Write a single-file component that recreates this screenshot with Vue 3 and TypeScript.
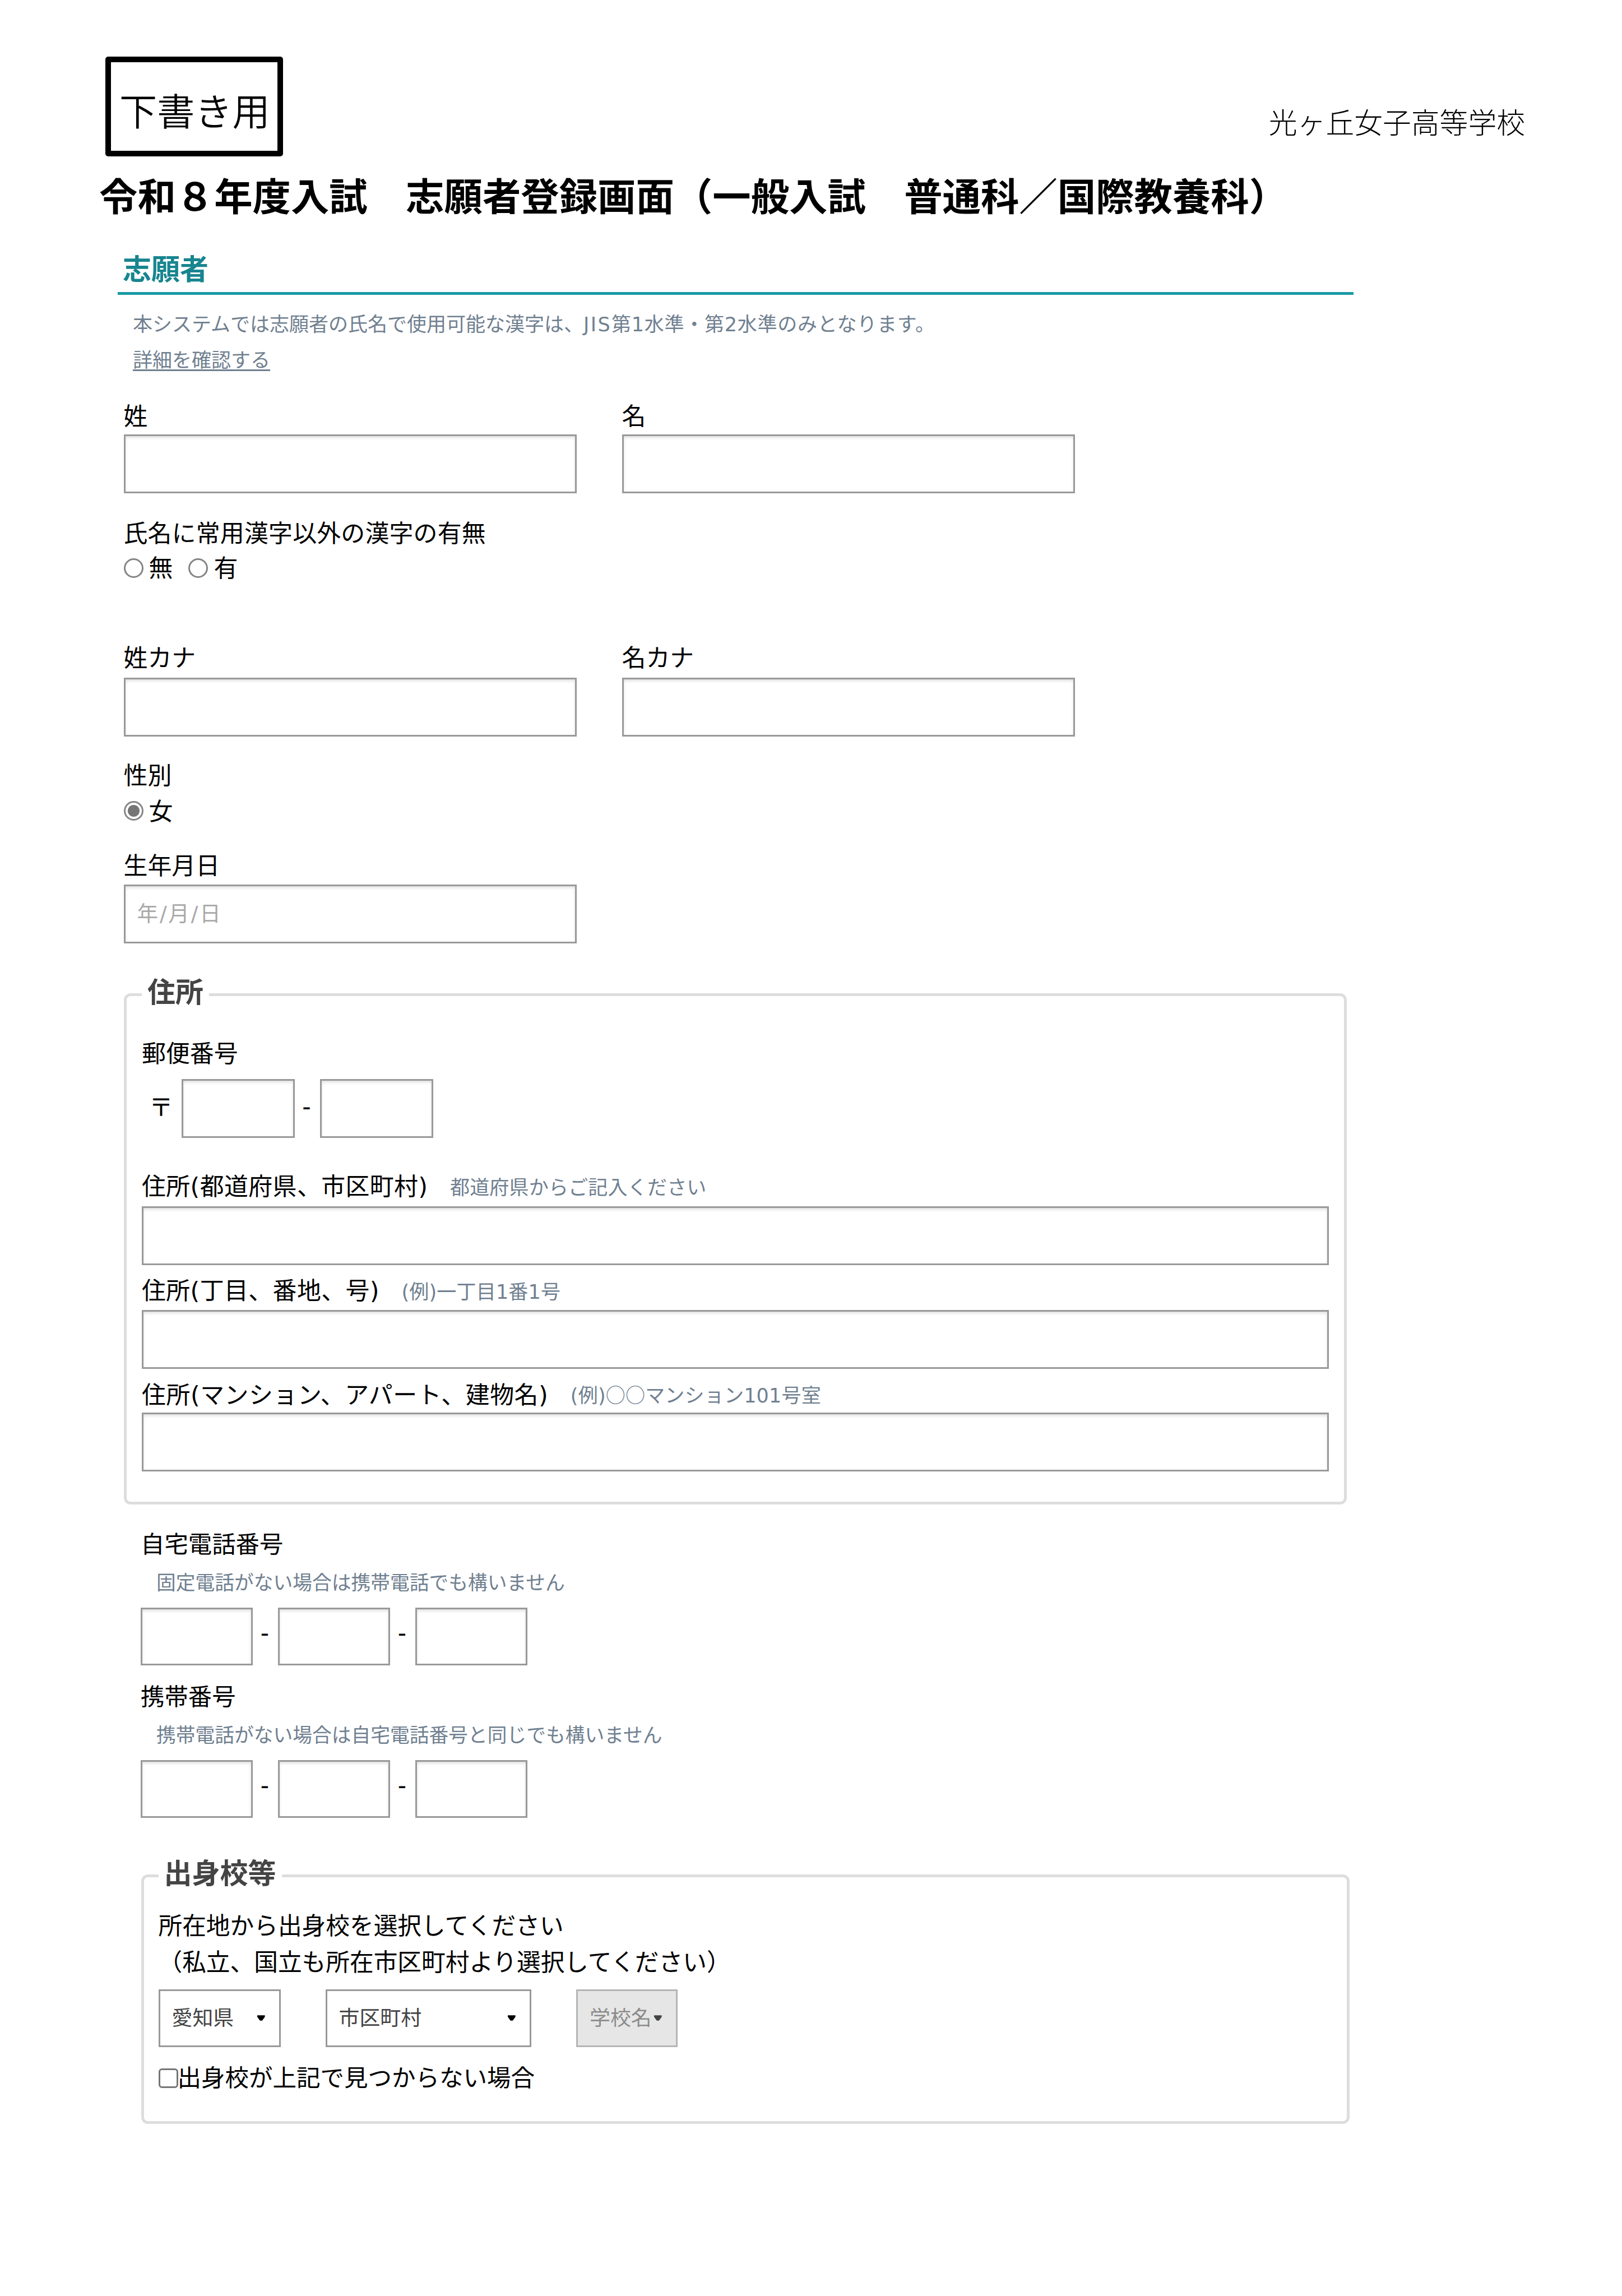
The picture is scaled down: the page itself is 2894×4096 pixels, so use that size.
<script setup lang="ts">
interface AddressField {
  label: string
  pre: string
  circles: string
  post: string
  cls: string
}

const addressFields: AddressField[] = [
  { label: '住所(都道府県、市区町村)', pre: '都道府県からご記入ください', circles: '', post: '', cls: 'addr-a' },
  { label: '住所(丁目、番地、号)', pre: '(例)一丁目1番1号', circles: '', post: '', cls: 'addr-b' },
  { label: '住所(マンション、アパート、建物名)', pre: '(例)', circles: '○○', post: 'マンション101号室', cls: 'addr-c' },
]

const phones = [
  { label: '自宅電話番号', note: '固定電話がない場合は携帯電話でも構いません' },
  { label: '携帯番号', note: '携帯電話がない場合は自宅電話番号と同じでも構いません' },
]

const selects = [
  { text: '愛知県', cls: 'pref', disabled: false },
  { text: '市区町村', cls: 'city', disabled: false },
  { text: '学校名', cls: 'school-select', disabled: true },
]
</script>

<template>
  <div class="page">
    <header class="top">
      <div class="draft">下書き用</div>
      <div class="school">光ヶ丘女子高等学校</div>
    </header>
    <h1 class="title">令和８年度入試　志願者登録画面（一般入試　普通科／国際教養科）</h1>

    <h2 class="section">志願者</h2>
    <div class="intro">
      <div class="intro-text">本システムでは志願者の氏名で使用可能な漢字は、<span class="jis">JIS</span><span class="level">第1水準・第2水準のみとなります。</span></div>
      <a class="link">詳細を確認する</a>
    </div>

    <div class="applicant">
      <div class="pair name">
        <div class="field"><div class="label">姓</div><div class="input"></div></div>
        <div class="field"><div class="label">名</div><div class="input"></div></div>
      </div>

      <div class="label kanji">氏名に常用漢字以外の漢字の有無</div>
      <div class="radios">
        <span class="radio"></span><span class="opt first">無</span>
        <span class="radio"></span><span class="opt">有</span>
      </div>

      <div class="pair kana">
        <div class="field"><div class="label">姓カナ</div><div class="input"></div></div>
        <div class="field"><div class="label">名カナ</div><div class="input"></div></div>
      </div>

      <div class="label gender">性別</div>
      <div class="radios gender-row">
        <span class="radio checked"></span><span class="opt">女</span>
      </div>

      <div class="label birth">生年月日</div>
      <div class="input birth-input">年<span class="slash">/</span>月<span class="slash">/</span>日</div>
    </div>

    <section class="group address">
      <h3 class="legend">住所</h3>
      <div class="label zip-label">郵便番号</div>
      <div class="zip">
        <span class="mark">〒</span>
        <div class="input zip-box"></div>
        <span class="dash">-</span>
        <div class="input zip-box"></div>
      </div>
      <div v-for="f in addressFields" :key="f.label" class="addr" :class="f.cls">
        <div class="addr-head">
          <span class="label">{{ f.label }}</span>
          <span class="hint">{{ f.pre }}<span class="circles">{{ f.circles }}</span>{{ f.post }}</span>
        </div>
        <div class="input"></div>
      </div>
    </section>

    <div class="phones">
      <div v-for="p in phones" :key="p.label" class="phone">
        <div class="label">{{ p.label }}</div>
        <div class="hint">{{ p.note }}</div>
        <div class="tel">
          <div class="input"></div>
          <span class="dash">-</span>
          <div class="input"></div>
          <span class="dash">-</span>
          <div class="input"></div>
        </div>
      </div>
    </div>

    <section class="group origin">
      <h3 class="legend">出身校等</h3>
      <div class="guide">
        <div>所在地から出身校を選択してください</div>
        <div class="paren-line">（私立、国立も所在市区町村より選択してください）</div>
      </div>
      <div class="selects">
        <div v-for="s in selects" :key="s.text" class="select" :class="[s.cls, { disabled: s.disabled }]">
          <span>{{ s.text }}</span>
          <svg class="arrow" viewBox="0 0 16 10"><path d="M1 0H15V3L10 10H6L1 3Z" /></svg>
        </div>
      </div>
      <div class="check-row">
        <span class="checkbox"></span>
        <span class="check-text">出身校が上記で見つからない場合</span>
      </div>
    </section>
  </div>
</template>

<style>
body {
  margin: 0;
  background: #fff;
}
</style>

<style scoped>
.page {
  width: 2894px;
  height: 4096px;
  overflow: hidden;
  background: #fff;
  color: #000;
  font-family: "DejaVu Sans", "Noto Sans CJK JP", sans-serif;
  font-size: 42.9px;
  box-sizing: border-box;
  white-space: nowrap;
}
.page * {
  box-sizing: border-box;
}
h1, h2, h3 {
  margin: 0;
}
.top {
  display: flex;
  justify-content: space-between;
  height: 279px;
  padding: 101px 173px 0 188px;
  font-family: "Liberation Serif", "Noto Sans CJK JP", serif;
  font-weight: 300;
}
.draft {
  width: 317px;
  height: 178px;
  border: 10px solid #000;
  border-radius: 5px;
  padding-left: 15px;
  font-size: 67.2px;
  font-weight: 350;
  line-height: 181px;
}
.school {
  font-size: 50.8px;
  line-height: 240px;
}
.title {
  margin: 18px 0 0 177px;
  height: 100px;
  line-height: 100px;
  font-family: "Noto Sans CJK JP", sans-serif;
  font-size: 68.4px;
  font-weight: 700;
}
.section {
  margin: 51px 0 0 210px;
  width: 2205px;
  height: 78px;
  padding-left: 9px;
  border-bottom: 5px solid #199aa6;
  font-size: 51px;
  line-height: 67px;
  color: #17858f;
  font-weight: 700;
}
.intro {
  margin: 22px 0 0 237px;
  height: 127px;
  font-size: 35px;
  line-height: 63.5px;
  color: #708090;
}
.jis {
  letter-spacing: 2.4px;
}
.level {
  letter-spacing: 0.75px;
}
.link {
  text-decoration: underline;
  text-decoration-thickness: 3px;
  text-underline-offset: 4px;
}
.label {
  height: 50px;
  line-height: 50px;
}
.input {
  height: 105px;
  border: 3px solid #999;
  background: #fff;
  box-shadow: inset 0 3px 5px rgba(0, 0, 0, 0.12);
}
.applicant {
  padding-left: 220.5px;
}
.pair {
  display: flex;
  gap: 81px;
}
.pair .field {
  width: 808px;
}
.pair.name {
  margin-top: 43px;
}
.name .label {
  margin-bottom: 7px;
}
.kanji {
  margin-top: 46.5px;
  letter-spacing: 0.2px;
}
.radios {
  display: flex;
  align-items: center;
  height: 50px;
  margin-top: 12.5px;
  margin-bottom: -0.5px;
  line-height: 50px;
}
.radio {
  width: 35px;
  height: 35px;
  margin-top: -2px;
  border: 3px solid #858585;
  border-radius: 50%;
  background: #fff;
}
.radio.checked {
  background: radial-gradient(circle, #767676 0 10px, #fff 11px);
}
.opt {
  margin-left: 10px;
}
.opt.first {
  margin-right: 28px;
}
.pair.kana {
  margin-top: 110.5px;
}
.kana .label {
  margin-bottom: 10px;
}
.gender {
  margin-top: 45px;
}
.radios.gender-row {
  margin-top: 13.5px;
}
.birth {
  margin-top: 47.5px;
}
.birth-input {
  width: 808px;
  margin-top: 8.5px;
  padding-left: 21px;
  font-size: 37.6px;
  line-height: 98px;
  color: #a9a9a9;
}
.slash {
  padding: 0 2.8px;
}
.group {
  border: 5px solid #ddd;
  border-radius: 12px;
}
.legend {
  width: max-content;
  height: 60px;
  margin-top: -36px;
  padding: 0 10px;
  background: #fff;
  font-size: 50px;
  line-height: 60px;
  color: #444;
}
.address {
  width: 2182px;
  height: 912px;
  margin: 89px 0 0 221px;
  padding: 0 27px;
}
.zip-label {
  margin-top: 53.5px;
}
.zip {
  display: flex;
  margin-top: 20.5px;
  line-height: 102px;
}
.mark {
  width: 70.5px;
  padding-left: 13px;
}
.zip-box {
  width: 202px;
}
.dash {
  width: 45px;
  text-align: center;
  text-indent: -2px;
  line-height: 98px;
}
.addr .label {
  letter-spacing: 0.4px;
}
.addr-a {
  margin-top: 61.5px;
}
.addr-a .input {
  margin-top: 10.5px;
}
.addr-b {
  margin-top: 21px;
}
.addr-b .input {
  margin-top: 9px;
}
.addr-c {
  margin-top: 21.5px;
}
.addr-c .input {
  margin-top: 6.5px;
}
.addr-head {
  display: flex;
  height: 50px;
}
.hint {
  height: 50px;
  font-size: 35px;
  color: #708090;
}
.addr-head .hint {
  margin-left: 39.5px;
  line-height: 48px;
  letter-spacing: 0.2px;
}
.addr-c .label {
  letter-spacing: 0.55px;
}
.addr-c .addr-head .hint {
  line-height: 46px;
}
.circles {
  font-family: "Noto Sans CJK JP", sans-serif;
}
.phones {
  margin: 47px 0 0 251px;
  font-size: 42.4px;
}
.phone .hint {
  margin: 18px 0 18.5px 28px;
  font-size: 34.75px;
  line-height: 50px;
}
.phone + .phone {
  margin-top: 32px;
}
.tel {
  display: flex;
}
.tel .dash {
  line-height: 92px;
}
.tel .input {
  width: 200px;
  height: 103.5px;
}
.origin {
  width: 2156px;
  height: 444.5px;
  margin: 101px 0 0 251.5px;
  padding: 0 26px;
}
.guide {
  height: 130px;
  margin-top: 30.5px;
  font-size: 42.7px;
  line-height: 65px;
}
.selects {
  display: flex;
  margin-top: 15px;
}
.select {
  display: flex;
  align-items: center;
  justify-content: space-between;
  height: 103.5px;
  padding: 0 24px 7px 21px;
  border: 3px solid #999;
  color: #444;
  font-size: 36.9px;
}
.pref {
  width: 218px;
}
.city {
  width: 367px;
  margin-left: 80px;
}
.school-select {
  width: 181px;
  margin-left: 80.5px;
}
.select.disabled {
  background: #e6e6e6;
  border-color: #b5b5b5;
  color: #8c8c8c;
}
.arrow {
  width: 15.6px;
  height: 10px;
  margin-top: 7px;
  fill: #000;
}
.disabled .arrow {
  fill: #444;
}
.check-row {
  display: flex;
  align-items: center;
  height: 50px;
  margin-top: 30.5px;
  font-size: 42.5px;
  line-height: 50px;
}
.checkbox {
  width: 35px;
  height: 35px;
  border: 3px solid #767676;
  border-radius: 6px;
}
.check-text {
  margin-left: -1px;
}
</style>
